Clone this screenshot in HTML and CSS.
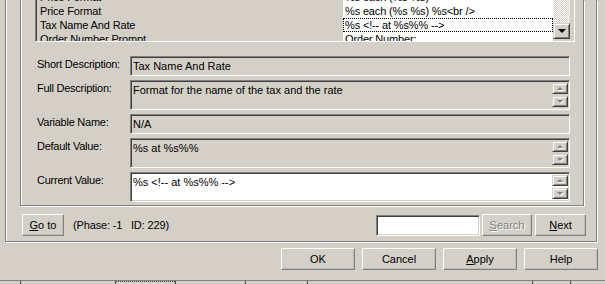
FILE: index.html
```html
<!DOCTYPE html>
<html lang="en">
<head>
  <meta charset="UTF-8" />
  <title>Settings</title>
  <link rel="stylesheet" href="styles.css">
</head>
<body>
  <div class="page">
    <div class="tab-page">
      <div class="group">

        <!-- property list, scrolled a little down -->
        <div class="grid">
          <div class="grid-rows">
            <div class="grid-row"><span class="name">Price Format</span><span class="value">%s each (%s %s)</span></div>
            <div class="grid-row"><span class="name">Price Format</span><span class="value">%s each (%s %s) %s&lt;br /&gt;</span></div>
            <div class="grid-row"><span class="name">Tax Name And Rate</span><span class="value focused">%s &lt;!-- at %s%% --&gt;</span></div>
            <div class="grid-row"><span class="name">Order Number Prompt</span><span class="value">Order Number:</span></div>
          </div>
          <div class="vscroll">
            <div class="track"></div>
            <div class="scroll-btn"><i class="arrow-down dark"></i></div>
          </div>
        </div>

        <div class="fields">
          <div class="field-row">
            <label>Short Description:</label>
            <div class="edit"><div class="edit-text">Tax Name And Rate</div></div>
          </div>
          <div class="field-row">
            <label>Full Description:</label>
            <div class="edit multi">
              <div class="edit-text">Format for the name of the tax and the rate</div>
              <div class="spin">
                <div class="scroll-btn"><i class="arrow-up"></i></div>
                <div class="scroll-btn"><i class="arrow-down"></i></div>
              </div>
            </div>
          </div>
          <div class="field-row">
            <label>Variable Name:</label>
            <div class="edit"><div class="edit-text">N/A</div></div>
          </div>
          <div class="field-row">
            <label>Default Value:</label>
            <div class="edit multi">
              <div class="edit-text">%s at %s%%</div>
              <div class="spin">
                <div class="scroll-btn"><i class="arrow-up"></i></div>
                <div class="scroll-btn"><i class="arrow-down"></i></div>
              </div>
            </div>
          </div>
          <div class="field-row">
            <label>Current Value:</label>
            <div class="edit multi editable">
              <div class="edit-text">%s &lt;!-- at %s%% --&gt;</div>
              <div class="spin">
                <div class="scroll-btn"><i class="arrow-up"></i></div>
                <div class="scroll-btn"><i class="arrow-down"></i></div>
              </div>
            </div>
          </div>
        </div>
      </div>

      <div class="find-bar">
        <button class="btn goto-btn"><u>G</u>o to</button>
        <span class="info">(Phase: -1   ID: 229)</span>
        <span class="spacer"></span>
        <div class="search-input"></div>
        <button class="btn search-btn disabled"><u>S</u>earch</button>
        <button class="btn next-btn"><u>N</u>ext</button>
      </div>
    </div>

    <div class="dialog-buttons">
      <button class="btn">OK</button>
      <button class="btn">Cancel</button>
      <button class="btn"><u>A</u>pply</button>
      <button class="btn">Help</button>
    </div>

    <div class="status-strip">
      <span class="cell c1"></span>
      <span class="cell c2"></span>
      <span class="cell c3"></span>
      <span class="cell c4"></span>
      <span class="cell c5"></span>
      <span class="cell c6"></span>
      <span class="cell c7"></span>
      <span class="cell c8"></span>
    </div>
  </div>
</body>
</html>
```
FILE: styles.css
```css
* {
  box-sizing: border-box;
}
body {
  margin: 0;
  background-color: #d4d0c8;
  font-family: "Liberation Sans", Arial, sans-serif;
  font-size: 11px;
  color: #000;
  overflow: hidden;
}
button {
  font: inherit;
  color: inherit;
  padding: 0;
}
u {
  text-decoration: underline;
}
.page {
  width: 605px;
  height: 284px;
  overflow: hidden;
}

/* etched frames, top edge is scrolled off */
.tab-page {
  margin-left: 5px;
  width: 592px;
  height: 242px;
  border: 1px solid #808080;
  border-top: 0;
  box-shadow: inset 1px 0 #fff, 1px 1px #fff;
}
.group {
  margin-left: 14px;
  width: 564px;
  height: 206px;
  padding-left: 14px;
  border: 1px solid #808080;
  border-top: 0;
  box-shadow: inset 1px 0 #fff, 1px 1px #fff;
}

/* property list */
.grid {
  display: flex;
  width: 540px;
  height: 42px;
  padding: 0 1px 1px 1px;
  border: 1px solid;
  border-top: 0;
  border-color: #808080 #fff #fff #808080;
  box-shadow: inset 1px 0 #404040, inset -1px -1px #d4d0c8;
  overflow: hidden;
}
.grid-rows {
  width: 516px;
  margin-top: -10px;
}
.grid-row {
  display: flex;
  height: 14px;
  line-height: 14px;
  white-space: nowrap;
  letter-spacing: -0.15px;
}
.grid-row .name {
  width: 306px;
  padding-left: 3px;
}
.grid-row .value {
  flex: 1;
  padding-left: 2px;
  background-color: #fff;
}
.grid-row .focused {
  outline: 1px dotted #000;
  outline-offset: -1px;
}
.vscroll {
  display: flex;
  flex-direction: column;
  width: 17px;
  padding-bottom: 1px;
}
.vscroll .track {
  flex: 1;
  background: repeating-conic-gradient(#fff 0 25%, #d4d0c8 0 50%) 0 0 / 2px 2px;
}
.vscroll .scroll-btn {
  height: 16px;
  flex: none;
}
.scroll-btn {
  display: flex;
  align-items: center;
  justify-content: center;
  background-color: #d4d0c8;
  border: 1px solid;
  border-color: #d4d0c8 #404040 #404040 #d4d0c8;
  box-shadow: inset 1px 1px #fff, inset -1px -1px #808080;
}
.arrow-up,
.arrow-down {
  width: 0;
  height: 0;
  border-left: 3px solid transparent;
  border-right: 3px solid transparent;
  filter: drop-shadow(1px 1px 0 #fff);
}
.arrow-up {
  border-bottom: 3px solid #808080;
}
.arrow-down {
  border-top: 3px solid #808080;
}
.arrow-down.dark {
  border-left-width: 4px;
  border-right-width: 4px;
  border-top: 4px solid #000;
  filter: none;
}

/* detail fields */
.fields {
  display: flex;
  flex-direction: column;
  gap: 4px;
  margin-top: 14px;
  padding-left: 2px;
}
.field-row {
  display: flex;
}
.field-row label {
  width: 93px;
  padding-top: 1px;
  line-height: 14px;
  letter-spacing: -0.25px;
  white-space: nowrap;
}
.edit {
  display: flex;
  width: 440px;
  height: 20px;
  padding: 1px;
  border: 1px solid;
  border-color: #808080 #fff #fff #808080;
  box-shadow: inset 1px 1px #404040, inset -1px -1px #d4d0c8;
}
.edit.multi {
  height: 30px;
}
.edit.editable {
  background-color: #fff;
}
.edit-text {
  flex: 1;
  padding: 1px 1px 0 1px;
  line-height: 15px;
  white-space: nowrap;
  overflow: hidden;
}
.spin {
  display: flex;
  flex-direction: column;
  gap: 2px;
  width: 16px;
  padding: 1px 0;
}
.spin .scroll-btn {
  flex: 1;
}

/* raised push buttons */
.btn {
  height: 22px;
  background-color: #d4d0c8;
  border: 1px solid;
  border-color: #fff #808080 #808080 #fff;
  box-shadow: inset -1px -1px #bfbbb3;
  text-align: center;
  cursor: pointer;
}
.btn.disabled {
  color: #808080;
  text-shadow: 1px 1px #fff;
}

.find-bar {
  display: flex;
  align-items: center;
  height: 22px;
  margin-top: 8px;
  padding: 0 10px 0 16px;
}
.goto-btn {
  width: 42px;
}
.info {
  margin-left: 9px;
  white-space: pre;
  letter-spacing: -0.15px;
}
.spacer {
  flex: 1;
}
.search-input {
  width: 104px;
  height: 21px;
  background-color: #fff;
  border: 1px solid;
  border-color: #808080 #fff #fff #808080;
  box-shadow: inset 1px 1px #404040, inset -1px -1px #d4d0c8;
}
.search-btn {
  width: 50px;
  margin-left: 2px;
}
.next-btn {
  width: 51px;
  margin-left: 3px;
}

.dialog-buttons {
  display: flex;
  justify-content: flex-end;
  gap: 7px;
  margin-top: 6px;
  padding-right: 7px;
}
.dialog-buttons .btn {
  width: 74px;
}

/* edge of the window underneath */
.status-strip {
  display: flex;
  height: 6px;
  margin-top: 10px;
  border-top: 1px solid #808080;
}
.status-strip .cell {
  border-left: 1px solid #404040;
}
.status-strip .c1 { width: 20px; border-left: 0; }
.status-strip .c2 { width: 95px; }
.status-strip .c3 { width: 60px; border-top: 1px dotted #404040; }
.status-strip .c4 { width: 70px; }
.status-strip .c5 { width: 62px; }
.status-strip .c6 { width: 225px; }
.status-strip .c7 { width: 38px; }
.status-strip .c8 { flex: 1; }
```
